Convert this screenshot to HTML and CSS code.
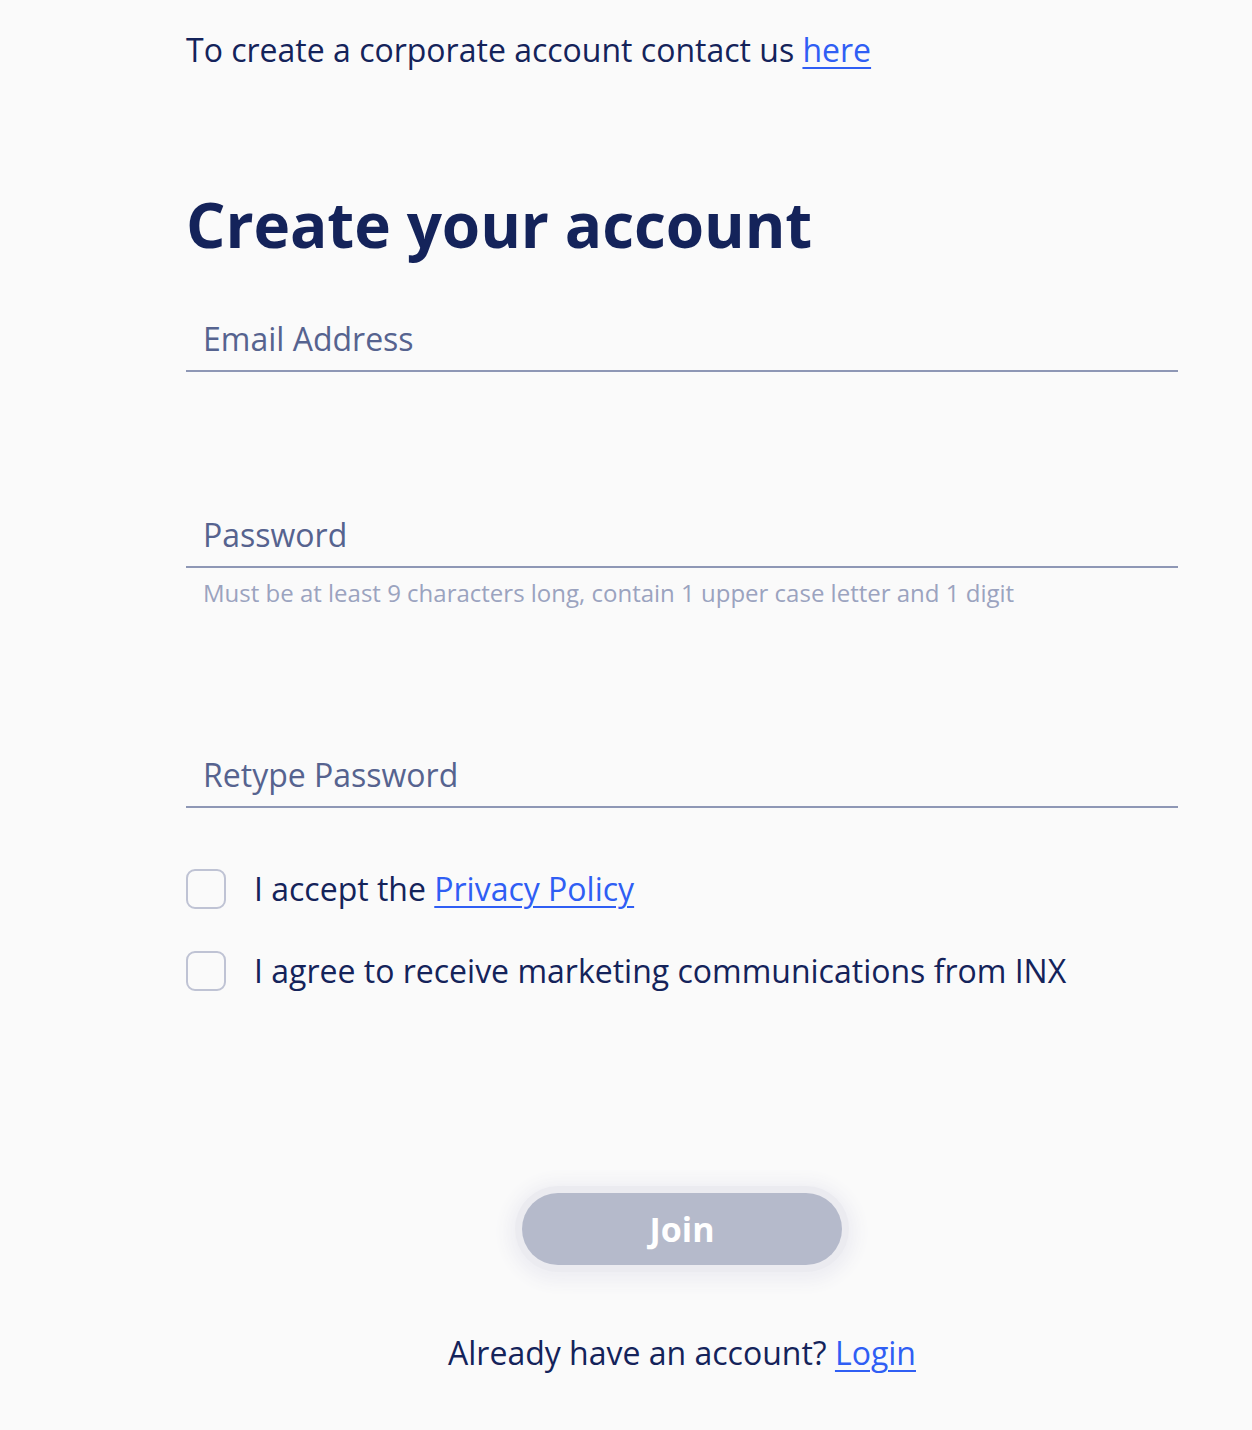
FILE: index.html
```html
<!DOCTYPE html>
<html lang="en">
<head>
<meta charset="utf-8">
<title>Create your account</title>
<link rel="stylesheet" href="styles.css">
</head>
<body>
<main class="page">
  <p class="corporate">To create a corporate account contact us <a href="#">here</a></p>
  <h1 class="title">Create your account</h1>
  <form class="form">
    <div class="field field-email">
      <label class="field-label">Email Address</label>
    </div>
    <div class="field field-password">
      <label class="field-label">Password</label>
    </div>
    <p class="hint">Must be at least 9 characters long, contain 1 upper case letter and 1 digit</p>
    <div class="field field-retype">
      <label class="field-label">Retype Password</label>
    </div>
    <div class="checks">
      <label class="check"><span class="box"></span><span class="check-text">I accept the <a href="#">Privacy Policy</a></span></label>
      <label class="check"><span class="box"></span><span class="check-text">I agree to receive marketing communications from INX</span></label>
    </div>
    <div class="actions">
      <button type="button" class="join">Join</button>
    </div>
    <p class="login">Already have an account? <a href="#">Login</a></p>
  </form>
</main>
</body>
</html>
```

FILE: styles.css
```css
html, body {
  margin: 0;
  padding: 0;
  background: #fafafa;
}
body {
  font-family: "Open Sans", "Noto Sans", sans-serif;
  color: #14235a;
}
a {
  color: #2f5ef4;
  text-decoration: underline;
  text-decoration-thickness: 2px;
  text-underline-offset: 5px;
}
.page {
  width: 992px;
  margin-left: 186px;
  padding-top: 29px;
}
.corporate {
  margin: 0;
  font-size: 32px;
  line-height: 42px;
}
.title {
  margin: 113px 0 0;
  font-size: 62px;
  font-weight: 700;
  line-height: 80px;
  letter-spacing: -0.1px;
}
.form {
  display: flex;
  flex-direction: column;
}
.field {
  border-bottom: 2px solid #8e97b5;
  padding: 0 17px 10px;
}
.field-email { margin-top: 54px; }
.field-password { margin-top: 142px; }
.field-retype { margin-top: 145px; }
.field-label {
  display: block;
  font-size: 32px;
  line-height: 42px;
  color: #56638f;
}
.hint {
  margin: 9px 0 0;
  padding-left: 17px;
  font-size: 24px;
  line-height: 32px;
  color: #9ba3bf;
}
.checks {
  display: flex;
  flex-direction: column;
  gap: 40px;
  margin-top: 60px;
}
.check {
  display: flex;
  align-items: center;
  gap: 28px;
}
.box {
  width: 36px;
  height: 36px;
  border: 2px solid #bfc3d4;
  border-radius: 9px;
  flex: none;
}
.check-text {
  font-size: 32px;
  line-height: 42px;
}
.actions {
  display: flex;
  justify-content: center;
  margin-top: 201px;
}
.join {
  width: 320px;
  height: 72px;
  border: none;
  border-radius: 36px;
  background: #b5bacb;
  color: #ffffff;
  font-family: "Open Sans", "Noto Sans", sans-serif;
  font-size: 34px;
  font-weight: 700;
  box-shadow: 0 0 0 7px #ebebf0, 0 3px 16px 14px #eeeef3;
}
.login {
  margin: 67px 0 0;
  text-align: center;
  font-size: 32px;
  line-height: 42px;
}
```
